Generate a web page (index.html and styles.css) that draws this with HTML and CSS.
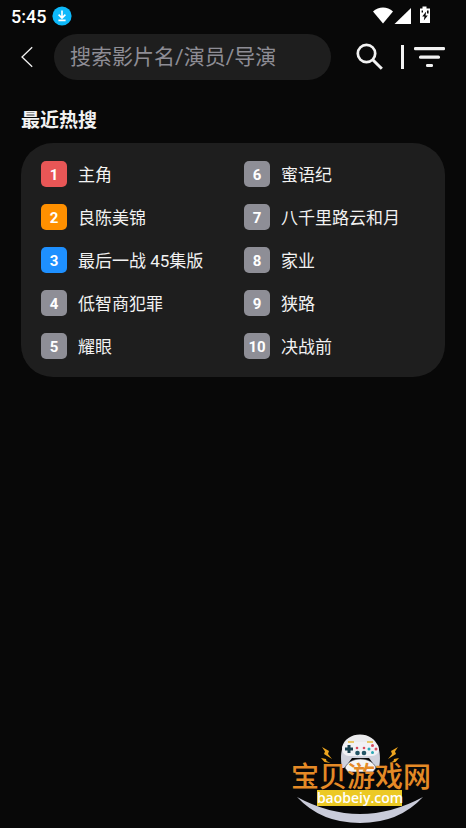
FILE: index.html
```
<!DOCTYPE html>
<html lang="zh-CN">
<head>
    <meta charset="UTF-8">
    <meta name="viewport" content="width=device-width, initial-scale=1.0">
    <title>搜索</title>
    <link rel="stylesheet" href="styles.css">
</head>
<body>

    <!-- Status bar -->
    <div class="status-bar">
        <span class="clock">5:45</span>
        <svg class="download" width="20" height="20" viewBox="0 0 20 20">
            <circle cx="10" cy="10" r="9.6" fill="#0db9fb"/>
            <path d="M10 4.600v7M6.600 8.600l3.400 3.400 3.400-3.400M6.400 14.400h7.200" fill="none" stroke="#fff" stroke-width="1.600"/>
        </svg>
        <svg class="signals" width="60" height="20" viewBox="0 0 60 20" fill="#fff">
            <path d="M0 5.400C5.500.2 14.500.2 20 5.400L10 17.400z"/>
            <path d="M38 2v16H21.500z"/>
            <path d="M49.500.5h4v2H57V17H47V2.500h2.500z"/>
            <path d="M53.200 5.400l-4 5.200h2.300l-.7 4 4-5.200h-2.300z" fill="#080808"/>
            <path d="M48.600 4.500h1.400v2h-1.400zM54 4.500h1.600v3H54z" fill="#080808"/>
        </svg>
    </div>

    <!-- Search header -->
    <form class="search-header">
        <button class="icon-btn back" type="button" aria-label="返回">
            <svg width="12" height="22" viewBox="0 0 12 22">
                <path d="M11.200 1.200L1 11l10.200 9.800" fill="none" stroke="#f2f2f2" stroke-width="1.300"/>
            </svg>
        </button>
        <input class="search-input" type="text" placeholder="搜索影片名/演员/导演" aria-label="搜索影片名/演员/导演">
        <button class="icon-btn search" type="submit" aria-label="搜索">
            <svg width="28" height="28" viewBox="0 0 28 28" fill="none" stroke="#f2f2f2">
                <circle cx="10.500" cy="10.500" r="8.700" stroke-width="2.700"/>
                <path d="M17 17l8.800 8.800" stroke-width="3"/>
            </svg>
        </button>
        <span class="divider"></span>
        <button class="icon-btn" type="button" aria-label="筛选">
            <svg width="31" height="22" viewBox="0 0 31 22" fill="#f2f2f2">
                <rect x="0" y="1" width="31" height="3.200" rx="1.300"/>
                <rect x="5" y="9.500" width="21" height="3.200" rx="1.500"/>
                <rect x="12" y="18" width="7" height="3" rx="1.200"/>
            </svg>
        </button>
    </form>

    <!-- Hot searches -->
    <main class="hot">
        <h1 class="hot-title">最近热搜</h1>
        <ol class="hot-list">
            <li><a href="#"><span class="rank first">1</span>主角</a></li>
            <li><a href="#"><span class="rank second">2</span>良陈美锦</a></li>
            <li><a href="#"><span class="rank third">3</span>最后一战 45集版</a></li>
            <li><a href="#"><span class="rank">4</span>低智商犯罪</a></li>
            <li><a href="#"><span class="rank">5</span>耀眼</a></li>
            <li><a href="#"><span class="rank">6</span>蜜语纪</a></li>
            <li><a href="#"><span class="rank">7</span>八千里路云和月</a></li>
            <li><a href="#"><span class="rank">8</span>家业</a></li>
            <li><a href="#"><span class="rank">9</span>狭路</a></li>
            <li><a href="#"><span class="rank">10</span>决战前</a></li>
        </ol>
    </main>

    <!-- Site logo -->
    <footer class="site-logo">
        <svg width="142" height="94" viewBox="0 0 142 94">
            <path d="M6 63Q69 97 132 63Q108 89 69 89Q30 89 6 63z" fill="#c9cbd9"/>
            <!-- gamepad -->
            <path d="M51 14C54-4 84-4 87 14z" fill="#ebebed"/>
            <path d="M51 34C49 24 50 12 55 9H84C89 12 90 24 88 34C84 35 82 29 78 24H61C57 29 55 35 51 34z" fill="#cfd1dc"/>
            <path d="M54 34C58 22 81 22 85 34L82 38H57z" fill="#f5f5f5" stroke="#3a3a46" stroke-width=".6"/>
            <rect x="51" y="8" width="37" height="14" rx="7" fill="#f1f1f5"/>
            <path d="M57 8h6M76 8h6" stroke="#e8b93a" stroke-width="1.500"/>
            <path d="M58 11v8M54 15h8" stroke="#18404f" stroke-width="3"/>
            <g fill="#d94b5e">
                <circle cx="81.500" cy="11.500" r="1.500"/><circle cx="85" cy="15" r="1.500"/>
                <circle cx="66" cy="14" r="1.300"/><circle cx="73" cy="14" r="1.300"/>
            </g>
            <g fill="#2ba8b5">
                <circle cx="81.500" cy="18.500" r="1.500"/><circle cx="78" cy="15" r="1.500"/>
            </g>
            <g fill="#245566">
                <circle cx="66.500" cy="19" r="2.300"/><circle cx="73" cy="19" r="2.300"/>
            </g>
            <g fill="#eda51f">
                <path d="M31 13l7 4-1 3 4 5-8-5 1-2.500z"/><path d="M30 24l5 1 .5 2 4 2-6-1z"/>
                <path d="M107 13l-7 4 1 3-4 5 8-5-1-2.500z"/><path d="M108 24l-5 1-.5 2-4 2 6-1z"/>
            </g>
            <rect x="26" y="56" width="85" height="16" fill="#ecc924"/>
            <text class="logo-name" x="70" y="53">宝贝游戏网</text>
            <text class="logo-url" x="69" y="69">baobeiy.com</text>
        </svg>
    </footer>

</body>
</html>
```
FILE: styles.css
```
* {
    box-sizing: border-box;
    margin: 0;
    padding: 0;
}

body {
    display: flex;
    flex-direction: column;
    min-height: 100vh;
    background: #080808;
    color: #f2f2f2;
    font-family: Roboto, "Noto Sans CJK SC", sans-serif;
}

/* Status bar */
.status-bar {
    display: flex;
    align-items: center;
    height: 32px;
    padding: 0 33px 0 11px;
}

.clock {
    font-size: 18px;
    font-weight: 500;
    color: #fff;
}

.download {
    margin-left: 6px;
}

.signals {
    margin-left: auto;
}

/* Search header */
.search-header {
    display: flex;
    align-items: center;
    padding: 2px 21px 0;
}

.icon-btn {
    display: flex;
    flex: none;
    border: none;
    background: none;
    cursor: pointer;
}

.back {
    margin-right: 21px;
}

.search-input {
    flex: 1;
    min-width: 0;
    height: 46px;
    padding: 0 16px;
    border: none;
    border-radius: 23px;
    outline: none;
    background: #1e1e1e;
    color: #f2f2f2;
    font-family: inherit;
    font-size: 21px;
}

.search-input::placeholder {
    color: #8e8d95;
}

.search {
    margin: 0 17px 0 25px;
}

.divider {
    width: 3px;
    height: 24px;
    margin-right: 10px;
    background: #f2f2f2;
}

/* Hot searches */
.hot {
    padding: 24px 21px;
}

.hot-title {
    margin-bottom: 5px;
    font-size: 19px;
    font-weight: 700;
    line-height: 34px;
}

.hot-list {
    display: grid;
    grid-template-rows: repeat(5, 26px);
    grid-template-columns: 1fr 1fr;
    grid-auto-flow: column;
    gap: 17px 22px;
    padding: 18px 20px;
    border-radius: 32px;
    background: #1e1e1e;
    list-style: none;
}

.hot-list a {
    display: flex;
    gap: 11px;
    color: #f2f2f2;
    font-size: 17px;
    line-height: 28px;
    white-space: nowrap;
    text-decoration: none;
}

.rank {
    width: 26px;
    height: 26px;
    border-radius: 5px;
    background: #8e8e96;
    color: #fff;
    font-size: 15px;
    font-weight: 700;
    text-align: center;
}

.first { background: #e85656; }
.second { background: #ff9000; }
.third { background: #1e90ff; }

/* Site logo */
.site-logo {
    display: flex;
    justify-content: flex-end;
    margin-top: auto;
    padding-right: 33px;
}

.logo-name {
    fill: #e58a26;
    font-size: 28px;
    font-weight: 500;
    text-anchor: middle;
}

.logo-url {
    fill: #fff;
    font-family: "Open Sans", sans-serif;
    font-size: 14px;
    font-weight: 600;
    text-anchor: middle;
}
```
